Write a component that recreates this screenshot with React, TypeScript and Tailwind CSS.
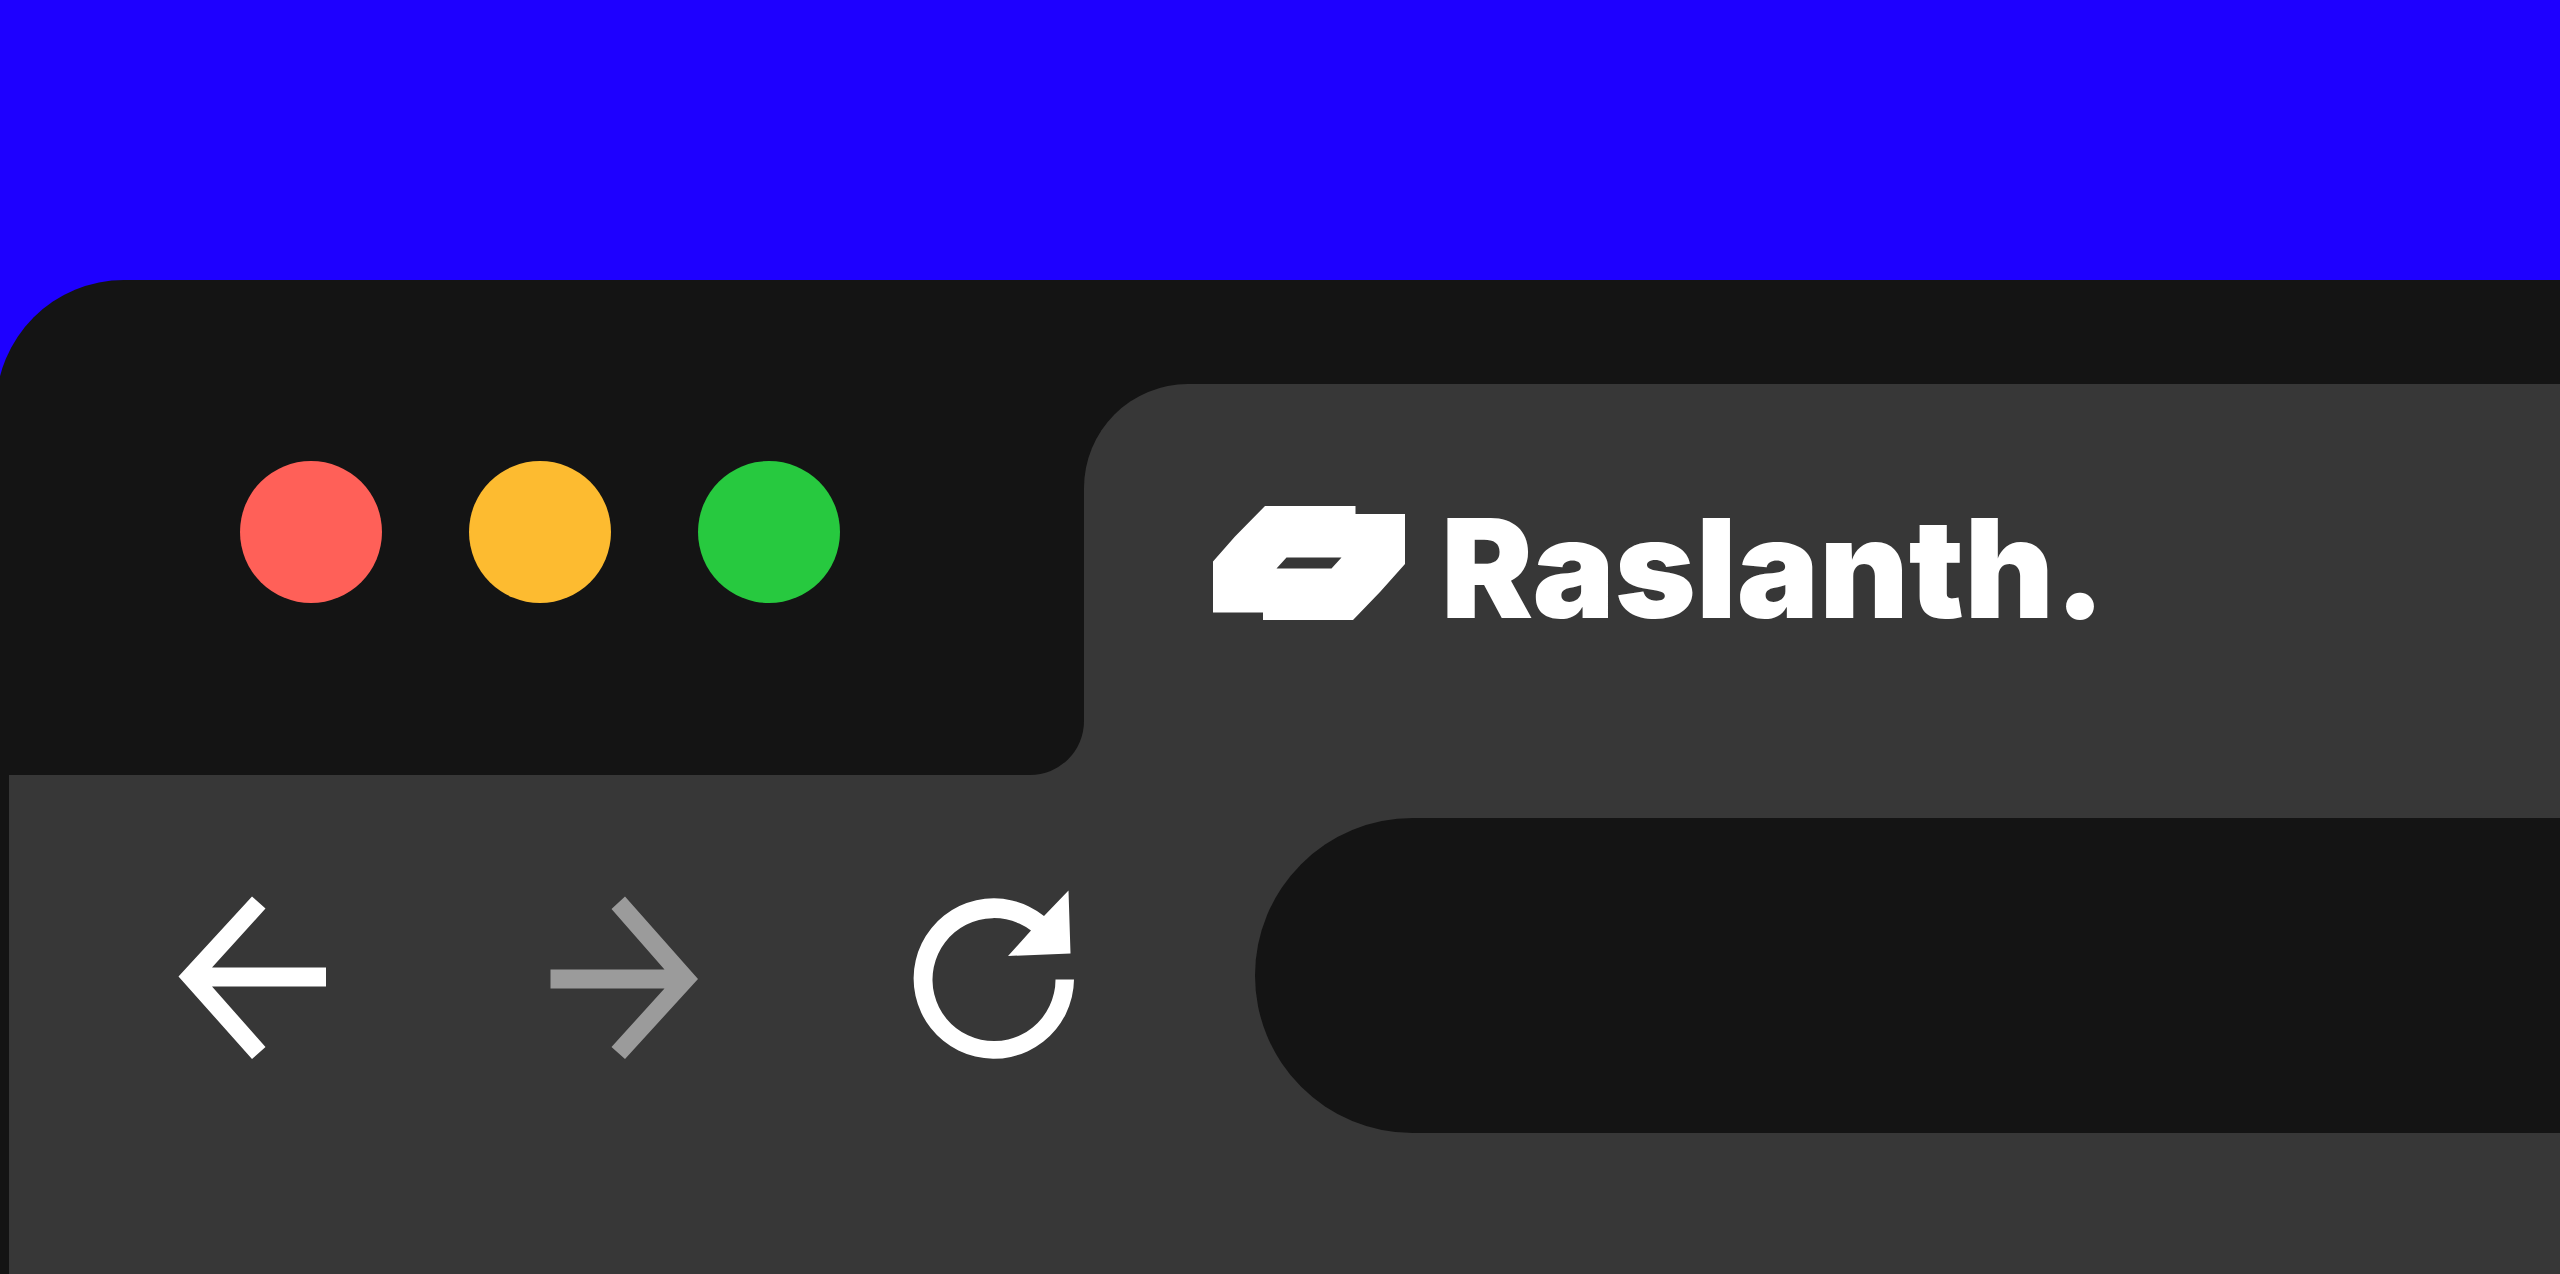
const lights = [
    { name: 'Close', color: 'bg-[#ff6058]' },
    { name: 'Minimize', color: 'bg-[#fdbb30]' },
    { name: 'Maximize', color: 'bg-[#27c93f]' },
];

const Logo = () => (
    <svg width="192" height="114" viewBox="0 0 192 114" fill="currentColor" fillRule="evenodd" className="shrink-0">
        <path d="M52 0H142.500V8H192V58L167 86L140 114H50V106.500H0V55.500L22 30.500ZM73.500 51.500L63.500 62.500H118.500L128.500 51.500Z" />
    </svg>
);

const BackIcon = () => (
    <svg width="162" height="170" viewBox="0 0 162 170" fill="currentColor">
        <path d="M7.500 86.500L81 6.500L94.500 18.500L41 77.500H155V96.500H41L94.500 157L81 169Z" />
    </svg>
);

const ForwardIcon = () => (
    <svg width="162" height="170" viewBox="0 0 162 170" fill="currentColor">
        <path d="M83 6.500L69.500 19L122.500 79.500H8.500V98.500H122.500L69.500 157L83 169L156 89Z" />
    </svg>
);

const ReloadIcon = () => (
    <svg width="162" height="170" viewBox="0 0 162 170" fill="currentColor">
        <path d="M161 89.500A80.200 80.200 0 1 1 131 26L155.500 .5L157.500 63.500L95 66L118 40.500A61.500 61.500 0 1 0 142.500 89.500Z" />
    </svg>
);

const App = () => {
    return (
        <div className="min-h-screen flex flex-col overflow-hidden bg-[#1e00ff] pt-[280px]">
            <div className="-ml-1 flex flex-1 flex-col rounded-tl-[128px] bg-[#141414] pl-[13px] pt-[104px]">

                <header className="flex">
                    <div className="w-[1075px] shrink-0 bg-[#373737]">
                        <div className="flex h-[391px] gap-[87px] rounded-br-[54px] bg-[#141414] pl-[231px] pt-[77px]">
                            {lights.map((light) => (
                                <button key={light.name} aria-label={light.name} className={`size-[142px] rounded-full ${light.color}`} />
                            ))}
                        </div>
                    </div>

                    <div className="flex-1 rounded-tl-[104px] bg-[#373737] pl-[129px] pt-[122px]">
                        <a href="#" className="flex w-fit items-end gap-9 text-white">
                            <Logo />
                            <span className="font-['Inter',sans-serif] text-[138px] font-black leading-[104px]">
                                Raslanth.
                            </span>
                        </a>
                    </div>
                </header>

                <nav className="flex flex-1 items-start bg-[#373737] pl-[162px] pt-[43px]">
                    <div className="flex h-[313px] shrink-0 items-center gap-[209px] text-white">
                        <button aria-label="Back">
                            <BackIcon />
                        </button>
                        <button aria-label="Forward" className="text-[#9b9b9b]">
                            <ForwardIcon />
                        </button>
                        <button aria-label="Reload">
                            <ReloadIcon />
                        </button>
                    </div>
                    <input
                        type="text"
                        aria-label="Address"
                        className="ml-[180px] h-[315px] min-w-0 flex-1 rounded-l-full bg-[#141414] px-36 font-['Inter',sans-serif] text-8xl text-white outline-none"
                    />
                </nav>

            </div>
        </div>
    );
};

export default App;
